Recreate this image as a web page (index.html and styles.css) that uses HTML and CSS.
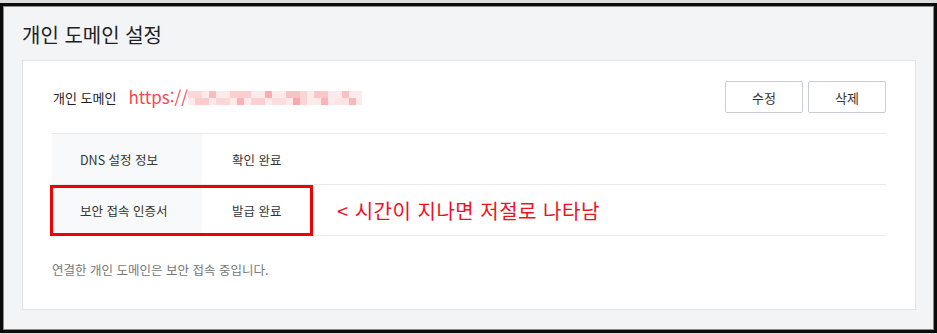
FILE: index.html
```html
<!DOCTYPE html>
<html lang="ko">
<head>
<meta charset="utf-8">
<title>개인 도메인 설정</title>
<link rel="stylesheet" href="styles.css">
</head>
<body>
<div class="frame">
  <h1 class="title">개인 도메인 설정</h1>
  <section class="card">
    <div class="head">
      <div class="domain">
        <span class="label">개인 도메인</span>
        <span class="url">https://</span>
        <svg class="blur" width="174" height="14" viewBox="0 0 174 14" aria-hidden="true">
          <rect x="0" y="0" width="174" height="14" fill="#fdeaea"/>
          <rect x="0" y="0" width="14" height="7" fill="#fcd8d8"/>
          <rect x="7" y="7" width="14" height="7" fill="#fbcaca"/>
          <rect x="21" y="0" width="7" height="7" fill="#fbbcbc"/>
          <rect x="28" y="7" width="14" height="7" fill="#fcd6d6"/>
          <rect x="42" y="0" width="21" height="7" fill="#fccece"/>
          <rect x="49" y="7" width="7" height="7" fill="#fab2b2"/>
          <rect x="63" y="7" width="14" height="7" fill="#fcd0d0"/>
          <rect x="77" y="0" width="7" height="7" fill="#faaeae"/>
          <rect x="84" y="7" width="14" height="7" fill="#fddcdc"/>
          <rect x="98" y="0" width="14" height="7" fill="#fbc2c2"/>
          <rect x="105" y="7" width="7" height="7" fill="#f9a8a8"/>
          <rect x="112" y="0" width="7" height="14" fill="#fcd4d4"/>
          <rect x="126" y="0" width="14" height="7" fill="#fbc6c6"/>
          <rect x="133" y="7" width="7" height="7" fill="#fab4b4"/>
          <rect x="147" y="7" width="14" height="7" fill="#fde4e4"/>
          <rect x="154" y="0" width="7" height="7" fill="#fbc0c0"/>
          <rect x="161" y="7" width="7" height="7" fill="#fab8b8"/>
        </svg>
      </div>
      <div class="actions">
        <button class="btn" type="button">수정</button>
        <button class="btn" type="button">삭제</button>
      </div>
    </div>
    <div class="table">
      <div class="row">
        <div class="key">DNS 설정 정보</div>
        <div class="val">확인 완료</div>
      </div>
      <div class="row">
        <div class="key">보안 접속 인증서</div>
        <div class="val">발급 완료</div>
        <div class="note">&lt; 시간이 지나면 저절로 나타남</div>
        <div class="mark"></div>
      </div>
    </div>
    <p class="foot">연결한 개인 도메인은 보안 접속 중입니다.</p>
  </section>
</div>
</body>
</html>
```

FILE: styles.css
```css
* { box-sizing: border-box; }
html, body { margin: 0; padding: 0; }
body {
  background: #dcdcdc;
  font-family: "Noto Sans CJK KR", "Noto Sans", sans-serif;
  color: #333;
  padding-top: 3px;
}
.frame {
  width: 937px;
  height: 330px;
  border: 3px solid #0a0a0a;
  box-shadow: inset 0 0 0 1px #8a8a8a;
  background: #f3f4f6;
  padding: 15px 18px 19px 19px;
}
.title {
  margin: 0 0 11px 0;
  font-size: 20px;
  line-height: 28px;
  font-weight: 400;
  color: #222;
}
.card {
  background: #fff;
  border: 1px solid #e0e3e8;
  height: 250px;
  padding: 20px 29px 0 29px;
}
.head {
  display: flex;
  align-items: center;
  justify-content: space-between;
  height: 32px;
  margin-bottom: 20px;
}
.domain {
  display: flex;
  align-items: center;
}
.label {
  font-size: 13px;
  color: #222;
  margin-left: 1px;
}
.url {
  font-size: 17px;
  color: #f4474f;
  margin-left: 12px;
  line-height: 20px;
}
.blur { display: block; margin-top: 2px; }
.actions { display: flex; gap: 5px; }
.btn {
  width: 78px;
  height: 32px;
  border: 1px solid #c9cdd3;
  border-radius: 2px;
  background: #fff;
  font-family: inherit;
  font-size: 13px;
  color: #333;
  padding: 0;
}
.table { border-top: 1px solid #e8e9eb; }
.row {
  position: relative;
  display: flex;
  align-items: center;
  height: 51px;
  border-bottom: 1px solid #e8e9eb;
  font-size: 12.5px;
}
.key {
  width: 150px;
  height: 100%;
  background: #f8f9fb;
  padding-left: 28px;
  display: flex;
  align-items: center;
  color: #333;
}
.val {
  width: 135px;
  padding-left: 30px;
  color: #333;
}
.note {
  font-size: 20px;
  letter-spacing: 0.5px;
  color: #f0101e;
}
.mark {
  position: absolute;
  left: -2px;
  top: 0;
  width: 263px;
  height: 51px;
  border: 3px solid #f00000;
}
.foot {
  margin: 25px 0 0 0;
  font-size: 12.5px;
  line-height: 18px;
  color: #777;
}
```
